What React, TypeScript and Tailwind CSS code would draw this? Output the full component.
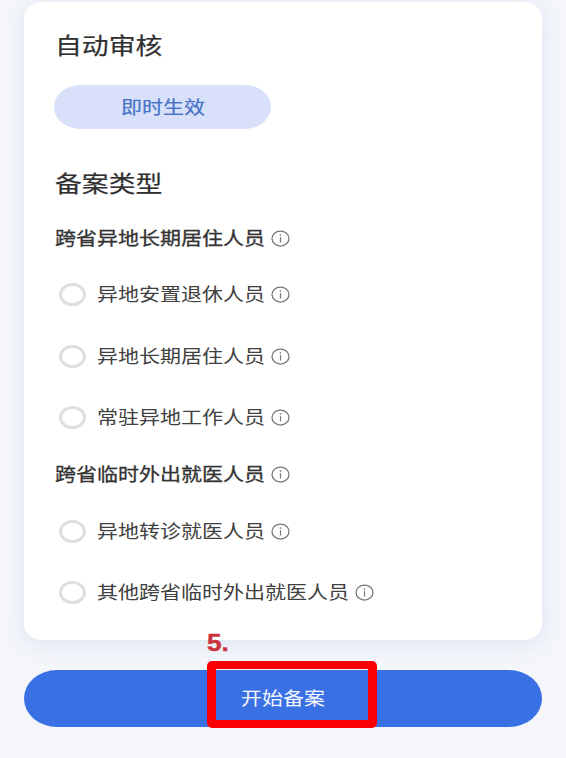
import React from "react";

function WideText({ text, advance, className }: { text: string; advance: number; className: string }) {
  return (
    <span className="block shrink-0 pb-[2px]" style={{ width: text.length * advance }}>
      <span className={`block w-max origin-left scale-x-[1.1667] whitespace-nowrap ${className}`}>{text}</span>
    </span>
  );
}

function InfoIcon() {
  return (
    <svg className="ml-[5.5px] h-[17px] w-[19px] shrink-0" viewBox="0 0 19 17" fill="none">
      <ellipse cx="9.5" cy="8.5" rx="8.5" ry="7.5" stroke="#777" strokeWidth="1.25" />
      <ellipse cx="9.5" cy="5.1" rx="0.9" ry="0.8" fill="#777" />
      <path d="M9.5 7.2V12.5" stroke="#777" strokeWidth="1.2" />
    </svg>
  );
}

function SectionHeading({ text }: { text: string }) {
  return (
    <div className="flex h-11 items-center">
      <WideText text={text} advance={21} className="text-[18px] text-[#333] [-webkit-text-stroke:0.3px_#333]" />
      <InfoIcon />
    </div>
  );
}

function Option({ text }: { text: string }) {
  return (
    <div className="flex h-[61.5px] items-center pl-1">
      <span className="mr-[11px] h-[23px] w-[27px] shrink-0 rounded-[50%] border-3 border-[#dfdfe3]" />
      <WideText text={text} advance={21} className="text-[18px] text-[#404040]" />
      <InfoIcon />
    </div>
  );
}

export default function App() {
  return (
    <div className="h-[758px] w-[566px] overflow-hidden bg-[#f4f6fa] px-6 pt-0.5 font-['Noto_Sans_CJK_SC',sans-serif]">
      <main className="h-[637.5px] rounded-[18px/16px] bg-white px-[31px] pt-3.5 shadow-[0_4px_20px_rgba(150,180,220,0.25)]">
        <h1 className="flex h-[59px] items-center">
          <WideText text="自动审核" advance={27} className="text-[23px] text-[#303030] [-webkit-text-stroke:0.2px_#303030]" />
        </h1>
        <div className="-ml-px mt-2.5 flex h-11 w-[217px] items-center justify-center rounded-[26px/22px] bg-[#d8e1f9]">
          <WideText text="即时生效" advance={21} className="text-[18px] text-[#4673c8] [-webkit-text-stroke:0.2px_#4673c8]" />
        </div>
        <h1 className="mt-[34px] flex h-10 items-center">
          <WideText text="备案类型" advance={27} className="text-[23px] text-[#303030] [-webkit-text-stroke:0.2px_#303030]" />
        </h1>
        <section className="mt-[13px]">
          <SectionHeading text="跨省异地长期居住人员" />
          <div className="mt-1">
            <Option text="异地安置退休人员" />
            <Option text="异地长期居住人员" />
            <Option text="常驻异地工作人员" />
          </div>
        </section>
        <section className="mt-1">
          <SectionHeading text="跨省临时外出就医人员" />
          <div className="mt-1">
            <Option text="异地转诊就医人员" />
            <Option text="其他跨省临时外出就医人员" />
          </div>
        </section>
      </main>
      <div className="relative mt-[30.5px]">
        <button className="flex h-[57px] w-full items-center justify-center rounded-[33px/28.5px] bg-[#3970e4]">
          <WideText text="开始备案" advance={21} className="text-[18px] text-[#f4f8ff]" />
        </button>
        <div className="absolute -top-[9.5px] left-[183px] h-[67.5px] w-[170px] rounded-[5px] border-x-[9px] border-y-8 border-[#fa0006]" />
        <span className="absolute -top-[39px] left-[183px] origin-left scale-x-[1.14] font-['Liberation_Sans',sans-serif] text-[23px] leading-6 font-bold text-[#cb343c] [-webkit-text-stroke:0.4px_#cb343c]">
          5.
        </span>
      </div>
    </div>
  );
}
